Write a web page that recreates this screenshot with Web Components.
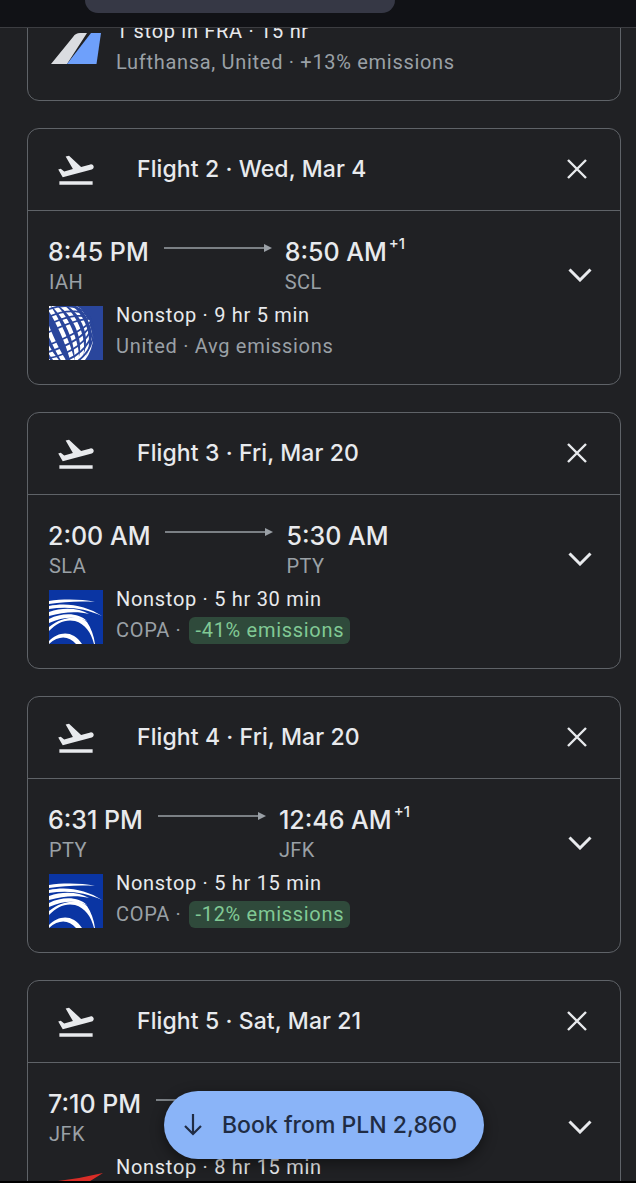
<!DOCTYPE html>
<html>
<head>
<meta charset="utf-8">
<title>Flights</title>
<style>
    html, body { margin: 0; height: 100%; background: #202124; overflow: hidden; }
    body { font-family: Roboto, "Liberation Sans", sans-serif; color: #e8eaed; }
</style>
</head>
<body>
<trip-screen>
    <flight-card bare>
        <flight-info route="1 stop in FRA · 15 hr" airline="Lufthansa, United · +13% emissions">
            <airline-logo kind="tail" slot="logo"></airline-logo>
        </flight-info>
    </flight-card>
    <flight-card heading="Flight 2 · Wed, Mar 4">
        <flight-times dep="8:45 PM" from="IAH" arr="8:50 AM" to="SCL" plus="+1"></flight-times>
        <flight-info route="Nonstop · 9 hr 5 min" airline="United · Avg emissions">
            <airline-logo kind="united" slot="logo"></airline-logo>
        </flight-info>
    </flight-card>
    <flight-card heading="Flight 3 · Fri, Mar 20">
        <flight-times dep="2:00 AM" from="SLA" arr="5:30 AM" to="PTY"></flight-times>
        <flight-info route="Nonstop · 5 hr 30 min" airline="COPA ·" badge="-41% emissions">
            <airline-logo kind="copa" slot="logo"></airline-logo>
        </flight-info>
    </flight-card>
    <flight-card heading="Flight 4 · Fri, Mar 20">
        <flight-times dep="6:31 PM" from="PTY" arr="12:46 AM" to="JFK" plus="+1"></flight-times>
        <flight-info route="Nonstop · 5 hr 15 min" airline="COPA ·" badge="-12% emissions">
            <airline-logo kind="copa" slot="logo"></airline-logo>
        </flight-info>
    </flight-card>
    <flight-card heading="Flight 5 · Sat, Mar 21">
        <flight-times dep="7:10 PM" from="JFK"></flight-times>
        <flight-info route="Nonstop · 8 hr 15 min">
            <airline-logo kind="red" slot="logo"></airline-logo>
        </flight-info>
    </flight-card>
    <book-button slot="fab">Book from PLN 2,860</book-button>
</trip-screen>

<script>
const DISPLAY_FONT = 'Inter, Roboto, sans-serif';

class TripScreen extends HTMLElement {
    constructor() {
        super();
        this.attachShadow({ mode: 'open' });
        this.shadowRoot.innerHTML = `
            <style>
                :host { display: flex; flex-direction: column; position: relative; height: 1183px; overflow: hidden; background: #202124; }
                .top { flex: none; height: 27px; background: #111216; border-bottom: 1px solid #3c3d41; position: relative; z-index: 1; }
                .pill { width: 310px; height: 13px; margin-left: 85px; background: #363845; border-radius: 0 0 22px 22px; }
                .scroll { flex: 1; min-height: 0; overflow: hidden; padding: 0 15px 0 27px; }
                .list { display: flex; flex-direction: column; gap: 27px; margin-top: -43px; }
                .bottom { flex: none; height: 2px; background: #000; }
                ::slotted([slot="fab"]) { position: absolute; left: 164px; top: 1091px; }
            </style>
            <div class="top"><div class="pill"></div></div>
            <div class="scroll"><div class="list"><slot></slot></div></div>
            <div class="bottom"></div>
            <slot name="fab"></slot>
        `;
    }
}

class FlightCard extends HTMLElement {
    constructor() {
        super();
        this.attachShadow({ mode: 'open' });
    }

    connectedCallback() {
        const bare = this.hasAttribute('bare');
        const header = bare ? '' : `
            <div class="head">
                <svg class="plane" viewBox="0 0 24 24" fill="#e8eaed"><path d="M2.5 19h19v2h-19z"/><path transform="translate(0 .8)" d="M22.07 9.64c-.21-.8-1.04-1.28-1.84-1.06L14.92 10l-6.9-6.43-1.93.51 4.14 7.17-4.97 1.33-1.97-1.54-1.45.39 1.82 3.16.77 1.33 1.6-.43 5.31-1.42 4.35-1.16L21 11.49c.81-.23 1.28-1.05 1.07-1.85z"/></svg>
                <div class="title">${this.getAttribute('heading')}</div>
                <svg class="close" viewBox="0 0 20 20" stroke="#e8eaed" stroke-width="2.4" fill="none"><path d="M1 1l18 18M19 1L1 19"/></svg>
            </div>`;
        const chevron = bare ? '' : `
            <svg class="chev" viewBox="0 0 24 14" stroke="#e8eaed" stroke-width="3" fill="none"><path d="M1.5 1.5L12 12L22.5 1.5"/></svg>`;
        this.shadowRoot.innerHTML = `
            <style>
                :host { display: block; flex: none; box-sizing: border-box; width: 594px; border: 1px solid #5f6368; border-radius: 12px; background: #202124; }
                .head { display: flex; align-items: center; box-sizing: border-box; height: 82px; padding-bottom: 2px; border-bottom: 1px solid #5f6368; }
                .plane { width: 42px; height: 42px; margin: 0 0 0 27px; flex: none; }
                .title { margin-left: 40px; flex: 1; font-family: ${DISPLAY_FONT}; font-size: 23px; font-weight: 500; letter-spacing: .1px; }
                .close { width: 20px; height: 20px; margin-right: 33px; flex: none; }
                .body { position: relative; padding: 24px 0 22px 21px; }
                .chev { position: absolute; right: 28px; top: 57px; width: 24px; height: 14px; }
            </style>
            ${header}
            <div class="body"><slot></slot>${chevron}</div>
        `;
    }
}

class FlightTimes extends HTMLElement {
    constructor() {
        super();
        this.attachShadow({ mode: 'open' });
    }

    connectedCallback() {
        const a = (n) => this.getAttribute(n) || '';
        const plus = a('plus') ? `<sup>${a('plus')}</sup>` : '';
        this.shadowRoot.innerHTML = `
            <style>
                :host { display: flex; align-items: flex-start; height: 59px; }
                .t { font-family: ${DISPLAY_FONT}; font-size: 25px; line-height: 34px; font-weight: 500; letter-spacing: 0; white-space: nowrap; position: relative; }
                .dep .t { margin-left: -1px; }
                .c { font-size: 20px; line-height: 26px; color: #9aa0a6; letter-spacing: .4px; }
                sup { position: absolute; font-size: 15px; line-height: 16px; top: 1px; font-weight: 500; margin-left: 2px; }
                .arrow { width: 108px; height: 10px; margin: 8px 13px 0 15px; flex: none; }
            </style>
            <div class="dep"><div class="t">${a('dep')}</div><div class="c">${a('from')}</div></div>
            <svg class="arrow" viewBox="0 0 108 10"><path d="M0 5h101" stroke="#9aa0a6" stroke-width="1.6"/><path d="M100 1l8 4-8 4z" fill="#9aa0a6"/></svg>
            <div><div class="t">${a('arr')}${plus}</div><div class="c">${a('to')}</div></div>
        `;
    }
}

class FlightInfo extends HTMLElement {
    constructor() {
        super();
        this.attachShadow({ mode: 'open' });
    }

    connectedCallback() {
        const a = (n) => this.getAttribute(n) || '';
        const badge = a('badge') ? `<span class="badge">${a('badge')}</span>` : '';
        this.shadowRoot.innerHTML = `
            <style>
                :host { display: flex; align-items: flex-start; gap: 13px; padding-top: 6px; }
                ::slotted(airline-logo) { margin-top: 6px; }
                .l { font-size: 20px; line-height: 31px; letter-spacing: .7px; white-space: nowrap; }
                .s { color: #9aa0a6; display: flex; align-items: center; gap: 8px; }
                .badge { background: #2f4a3b; color: #81c995; border-radius: 6px; padding: 0 6px; line-height: 27px; }
            </style>
            <slot name="logo"></slot>
            <div><div class="l">${a('route')}</div><div class="l s"><span>${a('airline')}</span>${badge}</div></div>
        `;
    }
}

class AirlineLogo extends HTMLElement {
    constructor() {
        super();
        this.attachShadow({ mode: 'open' });
    }

    connectedCallback() {
        const kind = this.getAttribute('kind');
        let art = '';
        if (kind === 'united') {
            // white meridians, chopped into tiles by blue parallels
            let meridians = '';
            for (const [rx, w] of [[35, 1.6], [29, 3], [22, 4], [14, 4.4], [6, 4.4]]) {
                meridians += `<ellipse cx="8" cy="29" rx="${rx}" ry="37" fill="none" stroke="#fff" stroke-width="${w}" transform="rotate(-24 8 29)"/>`;
            }
            let parallels = '';
            for (const ry of [6, 13, 20, 27, 33]) {
                parallels += `<ellipse cx="8" cy="29" rx="37" ry="${ry}" fill="none" stroke="#2a469c" stroke-width="1.8" transform="rotate(-24 8 29)"/>`;
            }
            art = `<rect width="54" height="54" fill="#2a469c"/>
                <clipPath id="box"><rect width="54" height="54"/></clipPath>
                <g clip-path="url(#box)">${meridians}${parallels}</g>`;
        } else if (kind === 'copa') {
            art = `<rect width="54" height="54" fill="#0a35a3"/>
                <g fill="#fff">
                    <path d="M0 11C14 9 32 9 46 12C30 11 14 12 0 14z"/>
                    <path d="M0 16C18 12 38 16 53 26C36 18 18 16 0 19z"/>
                    <path d="M0 22C14 17 30 18 40 24C28 21 14 22 0 26z"/>
                    <path d="M0 29C14 22 30 23 38 31C26 26 14 27 0 33z"/>
                    <path d="M0 37C12 27 30 24 38 32C42 38 45 46 46 54H45C42 42 36 34 26 31C16 29 8 33 0 41z"/>
                    <path d="M0 51C10 41 24 40 33 54H27C20 46 10 45 0 54z"/>
                </g>`;
        } else if (kind === 'tail') {
            art = `<path d="M2 42L24 15C26 12 28 11 31 11H38L18 42z" fill="#dadce0"/>
                <path d="M18 42L42 11H52L47.5 42z" fill="#6ea0fb"/>`;
        } else if (kind === 'red') {
            art = `<path d="M54 15L30 20L2 24V30H30z" fill="#d92d27"/>`;
        }
        this.shadowRoot.innerHTML = `
            <style>:host { display: block; flex: none; width: 54px; height: 54px; } svg { display: block; }</style>
            <svg width="54" height="54" viewBox="0 0 54 54">${art}</svg>
        `;
    }
}

class BookButton extends HTMLElement {
    constructor() {
        super();
        this.attachShadow({ mode: 'open' });
        this.shadowRoot.innerHTML = `
            <style>
                :host { display: flex; align-items: center; box-sizing: border-box; width: 320px; height: 68px; padding-left: 19px; gap: 19px; border-radius: 34px; background: #8ab4f8; color: #202c44; box-shadow: 0 4px 14px rgba(0,0,0,.45); font-family: ${DISPLAY_FONT}; font-size: 23px; font-weight: 500; white-space: nowrap; }
                svg { width: 20px; height: 22px; flex: none; }
            </style>
            <svg viewBox="0 0 20 22" fill="none" stroke="#202c44" stroke-width="2.2"><path d="M10 0v20M2 12l8 8 8-8"/></svg>
            <slot></slot>
        `;
    }
}

customElements.define('trip-screen', TripScreen);
customElements.define('flight-card', FlightCard);
customElements.define('flight-times', FlightTimes);
customElements.define('flight-info', FlightInfo);
customElements.define('airline-logo', AirlineLogo);
customElements.define('book-button', BookButton);
</script>
</body>
</html>
